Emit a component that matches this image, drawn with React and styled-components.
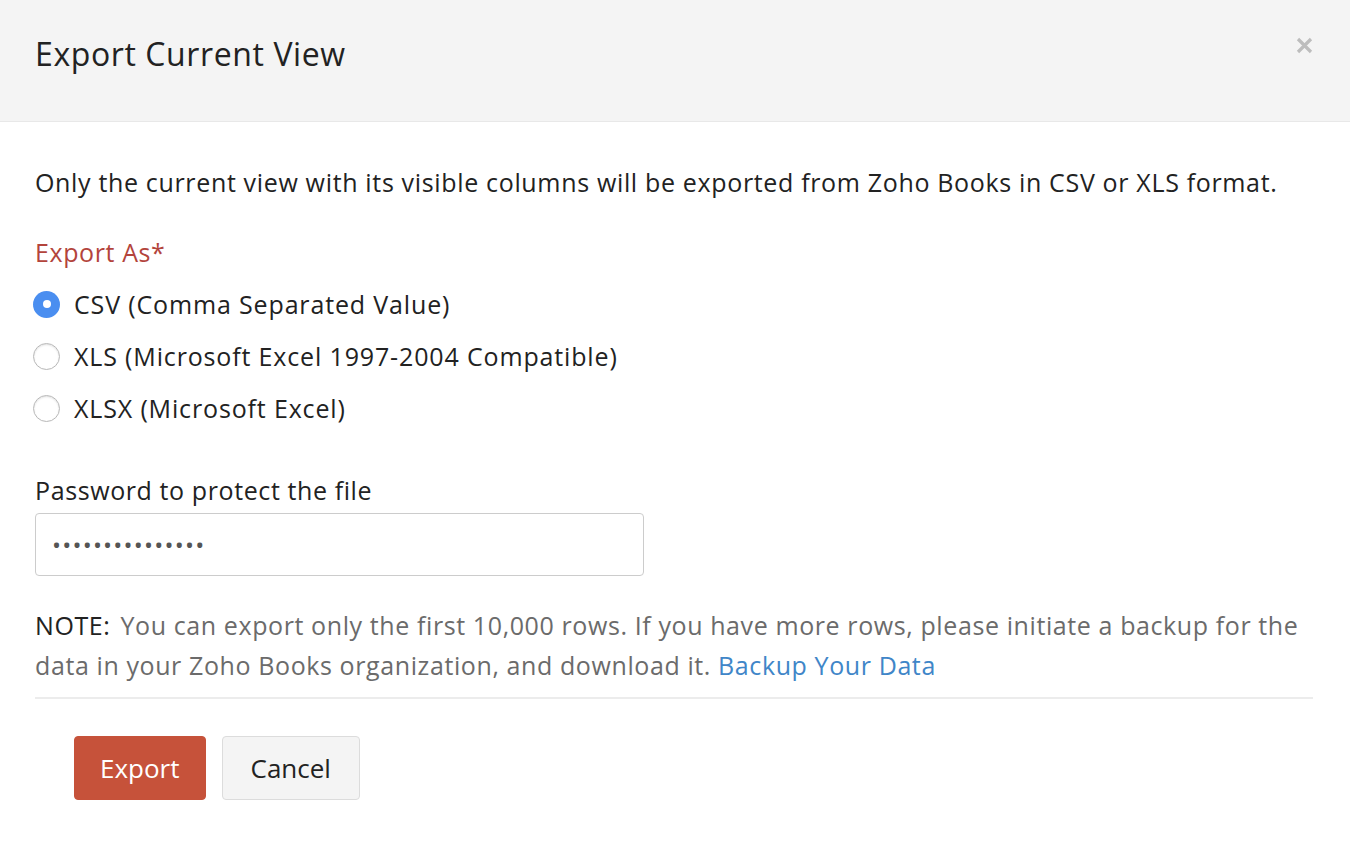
import React, { useState } from "react";
import styled, { createGlobalStyle } from "styled-components";

const Global = createGlobalStyle`
  html, body {
    margin: 0;
    padding: 0;
    background: #ffffff;
  }
  body {
    font-family: "Open Sans", Lato, sans-serif;
    color: #222222;
  }
  * {
    box-sizing: border-box;
  }
`;

const Modal = styled.div`
  width: 1350px;
  height: 842px;
  background: #ffffff;
`;

const Header = styled.div`
  display: flex;
  align-items: center;
  justify-content: space-between;
  height: 122px;
  padding: 0 34px 14px 35px;
  background: #f4f4f4;
  border-bottom: 1px solid #e8e8e8;
`;

const Title = styled.h1`
  margin: 0;
  font-size: 32px;
  font-weight: 400;
  letter-spacing: 0.6px;
  color: #222222;
`;

const Close = styled.button`
  display: flex;
  align-items: center;
  justify-content: center;
  width: 24px;
  height: 24px;
  margin-top: -16px;
  padding: 0;
  border: 0;
  background: none;
  cursor: pointer;
`;

const Body = styled.div`
  padding: 45px 37px 0 35px;
  font-size: 25px;
  letter-spacing: 0.6px;
`;

const Intro = styled.p`
  margin: 0 0 40px;
  line-height: 30px;
  letter-spacing: 0.66px;
`;

const Label = styled.div`
  line-height: 30px;
  color: ${(p) => (p.$required ? "#b3443c" : "#222222")};
  margin-bottom: ${(p) => (p.$required ? "22px" : "8px")};
`;

const Options = styled.div`
  display: flex;
  flex-direction: column;
  gap: 22px;
  margin-bottom: 52px;
`;

const Option = styled.label`
  display: flex;
  align-items: center;
  gap: 14px;
  line-height: 30px;
  letter-spacing: 0.85px;
  cursor: pointer;
  margin-left: -2px;
`;

const Radio = styled.span`
  width: 27px;
  height: 27px;
  border-radius: 50%;
  flex-shrink: 0;
  display: flex;
  align-items: center;
  justify-content: center;
  background: ${(p) => (p.$checked ? "#4a8ef0" : "#ffffff")};
  border: ${(p) => (p.$checked ? "none" : "1.5px solid #b8b8b8")};
  box-shadow: ${(p) => (p.$checked ? "none" : "inset 0 1px 2px rgba(0,0,0,0.12)")};

  &::after {
    content: "";
    display: ${(p) => (p.$checked ? "block" : "none")};
    width: 8px;
    height: 8px;
    border-radius: 50%;
    background: #ffffff;
  }
`;

const PasswordInput = styled.input`
  display: block;
  width: 609px;
  height: 63px;
  padding: 0 16px;
  border: 1.5px solid #cccccc;
  border-radius: 4px;
  font-family: inherit;
  font-size: 24px;
  letter-spacing: 1.2px;
  color: #555555;
  outline: none;
  margin-bottom: 29px;
`;

const Note = styled.p`
  margin: 0;
  padding-bottom: 12px;
  line-height: 40px;
  color: #6b6b6b;
  border-bottom: 2px solid #ececec;
`;

const NoteTag = styled.span`
  color: #222222;
  margin-right: 10px;
`;

const Link = styled.a`
  color: #3f86c8;
  text-decoration: none;
`;

const Actions = styled.div`
  display: flex;
  gap: 16px;
  padding: 37px 0 0 39px;
`;

const Button = styled.button`
  height: 64px;
  padding: 0 ${(p) => (p.$primary ? "25px" : "28px")};
  border-radius: 4px;
  font-family: inherit;
  font-size: 26px;
  cursor: pointer;
  background: ${(p) => (p.$primary ? "#c6523a" : "#f4f4f4")};
  color: ${(p) => (p.$primary ? "#ffffff" : "#222222")};
  border: ${(p) => (p.$primary ? "1px solid #c6523a" : "1.5px solid #dcdcdc")};
`;

const options = [
  { id: "csv", label: "CSV (Comma Separated Value)" },
  { id: "xls", label: "XLS (Microsoft Excel 1997-2004 Compatible)" },
  { id: "xlsx", label: "XLSX (Microsoft Excel)" },
];

export default function App() {
  const [format, setFormat] = useState("csv");

  return (
    <>
      <Global />
      <Modal>
        <Header>
          <Title>Export Current View</Title>
          <Close aria-label="Close">
            <svg width="17" height="17" viewBox="0 0 17 17">
              <path d="M2 2 L15 15 M15 2 L2 15" stroke="#bdbdbd" strokeWidth="3.2" />
            </svg>
          </Close>
        </Header>
        <Body>
          <Intro>
            Only the current view with its visible columns will be exported from Zoho Books in CSV or XLS format.
          </Intro>
          <Label $required>Export As*</Label>
          <Options>
            {options.map((o) => (
              <Option key={o.id} onClick={() => setFormat(o.id)}>
                <Radio $checked={format === o.id} />
                {o.label}
              </Option>
            ))}
          </Options>
          <Label>Password to protect the file</Label>
          <PasswordInput type="password" defaultValue="password1234567" />
          <Note>
            <NoteTag>NOTE:</NoteTag>You can export only the first 10,000 rows. If you have more rows, please initiate a backup for the data in your Zoho Books organization, and download it. <Link href="#">Backup Your Data</Link>
          </Note>
          <Actions>
            <Button $primary>Export</Button>
            <Button>Cancel</Button>
          </Actions>
        </Body>
      </Modal>
    </>
  );
}
